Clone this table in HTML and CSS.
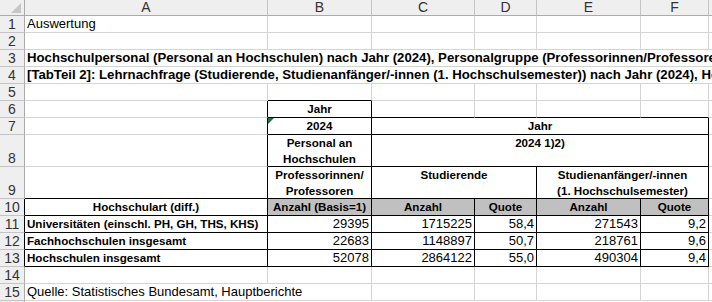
FILE: index.html
```html
<!DOCTYPE html>
<html lang="de">
<head>
<meta charset="utf-8">
<title>Auswertung</title>
<link rel="stylesheet" href="styles.css">
</head>
<body>
<div class="sheet">
  <!-- column headers -->
  <div class="corner"><svg class="corner-tri" width="10" height="10" viewBox="0 0 10 10"><polygon points="10,0 10,10 0,10" fill="#c6c6c6"/></svg></div>
  <div class="ch">A</div>
  <div class="ch">B</div>
  <div class="ch">C</div>
  <div class="ch">D</div>
  <div class="ch">E</div>
  <div class="ch">F</div>
  <div class="ch ch-last"></div>

  <!-- row 1 -->
  <div class="rh">1</div>
  <div class="c">Auswertung</div>
  <div class="c"></div><div class="c"></div><div class="c"></div><div class="c"></div><div class="c"></div><div class="c g"></div>

  <!-- row 2 -->
  <div class="rh">2</div>
  <div class="c"></div><div class="c"></div><div class="c"></div><div class="c"></div><div class="c"></div><div class="c"></div><div class="c g"></div>

  <!-- row 3 -->
  <div class="rh">3</div>
  <div class="c b title span-rest">Hochschulpersonal (Personal an Hochschulen) nach Jahr (2024), Personalgruppe (Professorinnen/Professoren) und Hochschulart</div>

  <!-- row 4 -->
  <div class="rh">4</div>
  <div class="c b title span-rest">[TabTeil 2]: Lehrnachfrage (Studierende, Studienanfänger/-innen (1. Hochschulsemester)) nach Jahr (2024), Hochschulart</div>

  <!-- row 5 -->
  <div class="rh">5</div>
  <div class="c"></div><div class="c bb"></div><div class="c"></div><div class="c"></div><div class="c"></div><div class="c"></div><div class="c g"></div>

  <!-- row 6 -->
  <div class="rh">6</div>
  <div class="c br"></div>
  <div class="c t b ctr">Jahr</div>
  <div class="c bb"></div><div class="c bb"></div><div class="c bb"></div><div class="c bb"></div><div class="c g"></div>

  <!-- row 7 -->
  <div class="rh">7</div>
  <div class="c br"></div>
  <div class="c t b ctr mark">2024</div>
  <div class="c t b ctr span4">Jahr</div>
  <div class="c g"></div>

  <!-- row 8 -->
  <div class="rh">8</div>
  <div class="c br"></div>
  <div class="c t b ctr">Personal an<br>Hochschulen</div>
  <div class="c t b ctr span4">2024 1)2)</div>
  <div class="c g"></div>

  <!-- row 9 -->
  <div class="rh">9</div>
  <div class="c br bb"></div>
  <div class="c t b ctr">Professorinnen/<br>Professoren</div>
  <div class="c t b ctr span2">Studierende</div>
  <div class="c t b ctr span2">Studienanfänger/-innen<br>(1. Hochschulsemester)</div>
  <div class="c g"></div>

  <!-- row 10 -->
  <div class="rh rhb">10</div>
  <div class="c t b ctr">Hochschulart (diff.)</div>
  <div class="c t b ctr hd">Anzahl (Basis=1)</div>
  <div class="c t b ctr hd">Anzahl</div>
  <div class="c t b ctr hd">Quote</div>
  <div class="c t b ctr hd">Anzahl</div>
  <div class="c t b ctr hd">Quote</div>
  <div class="c g"></div>

  <!-- row 11 -->
  <div class="rh rhb">11</div>
  <div class="c t b">Universitäten (einschl. PH, GH, THS, KHS)</div>
  <div class="c t num">29395</div>
  <div class="c t num">1715225</div>
  <div class="c t num">58,4</div>
  <div class="c t num">271543</div>
  <div class="c t num">9,2</div>
  <div class="c g"></div>

  <!-- row 12 -->
  <div class="rh rhb">12</div>
  <div class="c t b">Fachhochschulen insgesamt</div>
  <div class="c t num">22683</div>
  <div class="c t num">1148897</div>
  <div class="c t num">50,7</div>
  <div class="c t num">218761</div>
  <div class="c t num">9,6</div>
  <div class="c g"></div>

  <!-- row 13 -->
  <div class="rh rhb">13</div>
  <div class="c t b">Hochschulen insgesamt</div>
  <div class="c t num">52078</div>
  <div class="c t num">2864122</div>
  <div class="c t num">55,0</div>
  <div class="c t num">490304</div>
  <div class="c t num">9,4</div>
  <div class="c g"></div>

  <!-- row 14 -->
  <div class="rh">14</div>
  <div class="c"></div><div class="c"></div><div class="c"></div><div class="c"></div><div class="c"></div><div class="c"></div><div class="c g"></div>

  <!-- row 15 -->
  <div class="rh">15</div>
  <div class="c span2 overflow">Quelle: Statistisches Bundesamt, Hauptberichte</div>
  <div class="c"></div><div class="c"></div><div class="c"></div><div class="c"></div><div class="c g"></div>

  <!-- partial row 16 -->
  <div class="rh rh-cut"></div>
</div>
</body>
</html>
```

FILE: styles.css
```css
html, body {
  margin: 0;
  padding: 0;
  background: #ffffff;
}

body {
  width: 712px;
  height: 302px;
  overflow: hidden;
  font-family: "Liberation Sans", Arial, sans-serif;
  color: #000000;
}

.sheet {
  display: grid;
  grid-template-columns: 25px 243px 104px 103px 62px 104px 68px 3px;
  grid-template-rows: 16px repeat(7, 17px) 32px 32px repeat(6, 17px) 1px;
}

/* column headers */
.corner,
.ch {
  box-sizing: border-box;
  background: #efefef;
  border-bottom: 1px solid #ababab;
  border-right: 1px solid #c4c4c4;
}

.corner {
  position: relative;
  border-right-color: #ababab;
}

.corner-tri {
  position: absolute;
  right: 3px;
  bottom: 2px;
}

.ch {
  display: flex;
  align-items: center;
  justify-content: center;
  font-size: 14px;
  line-height: 15px;
  color: #333333;
}

.ch-last {
  border-right: none;
}

/* row headers */
.rh {
  box-sizing: border-box;
  background: #efefef;
  border-right: 1px solid #ababab;
  border-bottom: 1px solid #c4c4c4;
  display: flex;
  align-items: flex-end;
  justify-content: center;
  font-size: 14px;
  line-height: 16px;
  color: #333333;
}

.rhb {
  border-right-color: #000000;
}

.rh-cut {
  border-bottom: none;
}

/* cells */
.c {
  box-sizing: border-box;
  border-right: 1px solid #d4d4d4;
  border-bottom: 1px solid #d4d4d4;
  overflow: hidden;
  white-space: nowrap;
  font-size: 13px;
  line-height: 16px;
  padding: 0 2px;
}

.g {
  border-right: none;
}

.b {
  font-weight: bold;
  font-size: 11.6px;
}

.title {
  font-size: 13.2px;
}

.span-rest {
  grid-column: 2 / -1;
  border-right: none;
}

.span4 {
  grid-column: span 4;
}

.span2 {
  grid-column: span 2;
}

.overflow {
  overflow: visible;
}

/* table borders */
.t {
  border-right-color: #000000;
  border-bottom-color: #000000;
}

.bb {
  border-bottom-color: #000000;
}

.br {
  border-right-color: #000000;
}

.ctr {
  text-align: center;
}

.hd {
  background: #c0c0c0;
}

.num {
  text-align: right;
  padding-right: 2px;
}

.mark {
  position: relative;
}

.mark::before {
  content: "";
  position: absolute;
  left: 0;
  top: 0;
  width: 0;
  height: 0;
  border-top: 6px solid #1f7145;
  border-right: 6px solid transparent;
}
```
